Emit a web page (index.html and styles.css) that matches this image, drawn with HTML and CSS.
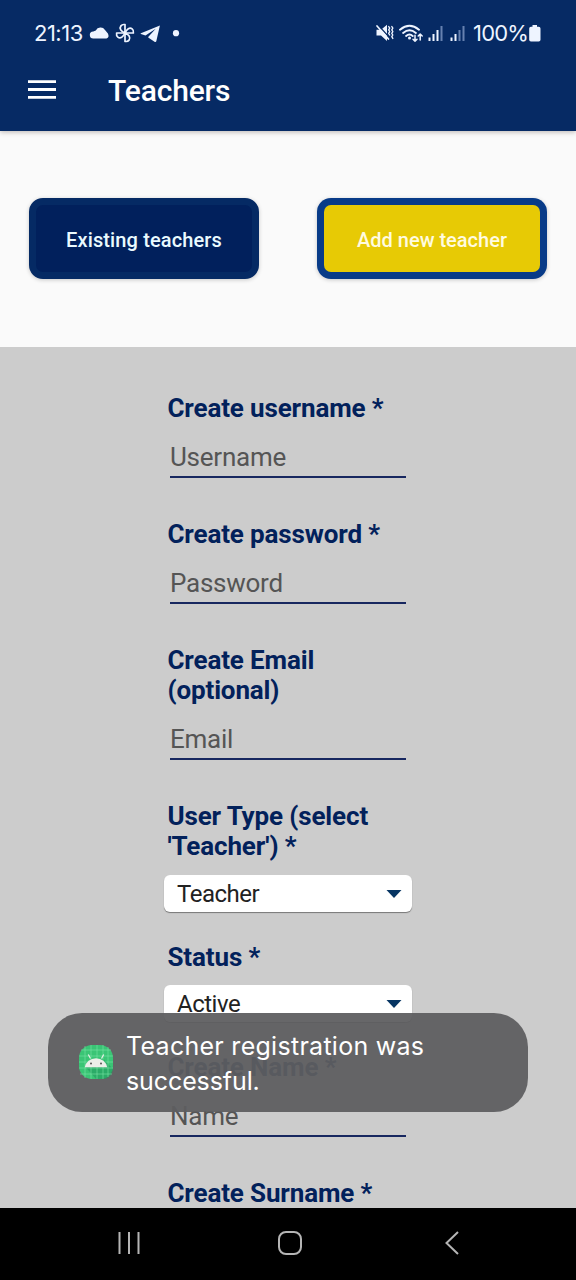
FILE: index.html
```html
<!DOCTYPE html>
<html lang="en">
<head>
<meta charset="utf-8">
<title>Teachers</title>
<link rel="stylesheet" href="styles.css">
</head>
<body>
<div class="screen">
  <header class="header">
    <div class="status">
      <span class="clock">21:13</span>
      <svg class="status-left" width="96" height="24" viewBox="0 0 96 24">
        <path fill="#eef4ff" d="M4.500 17.600a3.600 3.600 0 0 1-.2-7.200L6.800 9.600A5.300 5.300 0 0 1 16 9L18.900 12.400q1.800 3.800-1.400 5.200z"/>
        <g fill="none" stroke="#eef4ff" stroke-width="1.700" stroke-linejoin="round">
          <path d="M36 12V3.600C32.300 2.900 30.300 6 31.700 8.700Q33 10.700 36 12"/>
          <path d="M36 12V3.600C32.300 2.900 30.300 6 31.700 8.700Q33 10.700 36 12" transform="rotate(90 36 12)"/>
          <path d="M36 12V3.600C32.300 2.900 30.300 6 31.700 8.700Q33 10.700 36 12" transform="rotate(180 36 12)"/>
          <path d="M36 12V3.600C32.300 2.900 30.300 6 31.700 8.700Q33 10.700 36 12" transform="rotate(270 36 12)"/>
        </g>
        <path fill="#eef4ff" d="M70.900 4.600L51.900 12.200q-.8.500 0 .9l4.600 1.400l10.200-6.800l-7.300 8l-.2.900l6.700 4.300q1 .5 1.400-.6z"/>
        <circle cx="87" cy="12.200" r="3.100" fill="#eef4ff"/>
      </svg>
      <svg class="status-right" width="94" height="24" viewBox="0 0 94 24">
        <g fill="#eef4ff">
          <path d="M2.500 8.700h4.500l6-5V20l-6-5.500H2.500z"/>
          <circle cx="35.500" cy="17" r="1.500"/>
          <rect x="54.500" y="16.500" width="2" height="3.500"/>
          <rect x="58.500" y="13" width="2" height="7"/>
          <rect x="62.500" y="9" width="2" height="11"/>
          <rect x="76.500" y="16.500" width="2" height="3.500"/>
          <rect x="80.500" y="13" width="2" height="7"/>
        </g>
        <g fill="#6681b0">
          <rect x="66.500" y="5" width="2" height="15"/>
          <rect x="84.500" y="9" width="2" height="11"/>
          <rect x="88.500" y="5" width="2" height="15"/>
        </g>
        <path d="M4.500 4.500L15 16" stroke="#062a64" stroke-width="1.200"/>
        <g fill="none" stroke="#eef4ff" stroke-width="1.700" stroke-linecap="round" stroke-linejoin="round">
          <path d="M3 5L14.500 18"/>
          <path d="M14.700 5.500l1 1.700l-1 1.700l1 1.700l-1 1.700l1 1.700M17.800 5.500l1 1.700l-1 1.700l1 1.700l-1 1.700l1 1.700l-1 1.700l1 1.700" stroke-width="1.400"/>
          <path d="M26 8.700Q35.500 1 45 8.700M29.100 12Q35.500 6.700 41.900 12M32.100 15Q35.500 12.200 38.700 15" stroke-width="1.900"/>
          <path d="M41 14.200v6m-2-2l2 2l2-2M46.200 19v-6m-2 2l2-2l2 2" stroke-width="1.500"/>
        </g>
      </svg>
      <span class="battery-text">100%</span>
      <svg class="battery" width="12" height="17" viewBox="0 0 12 17"><path fill="#eef4ff" d="M3.500 0h4.500v1.700h1.700q1.800 0 1.800 1.800v11.200q0 1.800-1.800 1.800h-7.700q-1.800 0-1.800-1.800v-11.200q0-1.800 1.800-1.800h1.500z"/></svg>
    </div>
    <div class="title-row">
      <svg class="menu" width="28" height="20" viewBox="0 0 28 20"><path fill="#fff" d="M0 .3h28v2.800H0zM0 8.100h28v2.800H0zM0 15.900h28v2.800H0z"/></svg>
      <h1 class="title">Teachers</h1>
    </div>
  </header>
  <nav class="tabs">
    <button class="tab existing">Existing teachers</button>
    <button class="tab add">Add new teacher</button>
  </nav>
  <main class="form">
    <div class="field"><div class="label">Create username *</div><div class="input">Username</div></div>
    <div class="field"><div class="label">Create password *</div><div class="input">Password</div></div>
    <div class="field"><div class="label">Create Email<br>(optional)</div><div class="input">Email</div></div>
    <div class="field choice"><div class="label">User Type (select<br>'Teacher') *</div><div class="select">Teacher<svg width="16" height="8" viewBox="0 0 16 8"><path fill="#073563" d="M.5 0h15L8 8z"/></svg></div></div>
    <div class="field choice"><div class="label">Status *</div><div class="select">Active<svg width="16" height="8" viewBox="0 0 16 8"><path fill="#073563" d="M.5 0h15L8 8z"/></svg></div></div>
    <div class="field"><div class="label">Create Name *</div><div class="input">Name</div></div>
    <div class="field"><div class="label">Create Surname *</div></div>
  </main>
  <footer class="navbar">
    <svg width="24" height="26" viewBox="0 0 24 26"><path d="M2.500 2v22M12 2v22M21.500 2v22" stroke="#b5b5b5" stroke-width="2"/></svg>
    <svg class="home" width="26" height="26" viewBox="0 0 26 26"><rect x="2" y="2" width="22" height="22" rx="7" fill="none" stroke="#b5b5b5" stroke-width="2"/></svg>
    <svg width="18" height="26" viewBox="0 0 18 26"><path d="M15 2L3.500 13L15 24" fill="none" stroke="#b5b5b5" stroke-width="2"/></svg>
  </footer>
  <div class="toast">
    <svg class="app-icon" width="34" height="34" viewBox="0 0 34 34">
      <rect width="34" height="34" rx="13" fill="#3ac575"/>
      <path d="M6.500 22L17 34h9q7-2 8-10L24.500 14z" fill="#239c60" opacity=".65"/>
      <path d="M6 1v32M12 0v34M18 0v34M24 0v34M29 2v30M2 5h30M0 11h34M0 17h34M0 23h34M1 29h32" stroke="#7be3a5" stroke-width=".6"/>
      <path d="M5.800 22.300a11.300 10.500 0 0 1 22.400 0z" fill="#eceee9"/>
      <path d="M11.500 13.500L9.300 9.500M22.500 13.500l2.200-4" stroke="#eceee9" stroke-width="1.200"/>
      <circle cx="12" cy="18.500" r="1" fill="#555"/><circle cx="22" cy="18.500" r="1" fill="#555"/>
    </svg>
    <div class="toast-text"><span class="toast-first">Teacher registration was</span><br><span class="toast-second">successful.</span></div>
  </div>
</div>
</body>
</html>
```
FILE: styles.css
```css
* { box-sizing: border-box; }
body { margin: 0; font-family: Roboto, "Liberation Sans", sans-serif; }
svg { display: block; flex: none; }
.screen { position: relative; width: 576px; height: 1280px; display: flex; flex-direction: column; overflow: hidden; background: #fafafa; }
.header { height: 131px; flex: none; background: #062a64; box-shadow: 0 1px 5px rgba(40, 20, 10, .3); z-index: 1; }
.status { height: 65px; padding: 1px 33px 0 34px; display: flex; align-items: center; color: #eef4ff; }
.clock { font: 22px/26px Inter, sans-serif; letter-spacing: -.5px; width: 55px; flex: none; }
.status-right { margin-left: 189px; }
.battery-text { font: 22px/26px Inter, sans-serif; letter-spacing: -.8px; width: 57px; margin-left: 5px; flex: none; }
.battery { margin-left: -1px; }
.title-row { padding: 8px 28px 0; display: flex; align-items: center; }
.menu { margin-bottom: 2px; }
.title { margin: 0 0 0 52px; font-size: 30px; line-height: 35px; font-weight: 500; letter-spacing: -.15px; color: #fff; }
.tabs { height: 216px; flex: none; padding: 67px 29px 0; display: flex; justify-content: space-between; }
.tab { width: 230px; height: 81px; padding: 2px 0 0; border-radius: 14px; font: 500 20px/24px Roboto, sans-serif; box-shadow: 0 1px 4px rgba(0, 0, 0, .2); }
.existing { background: #01205c; border: 7px solid #052a64; color: #eafaff; letter-spacing: .12px; }
.add { background: linear-gradient(#e7ca05, #e7ca05) padding-box, #083b88 border-box; border: 7px solid transparent; color: #fffbe0; }
.form { flex: 1; min-height: 0; overflow: hidden; background: #ccc; padding: 46px 164px 0; }
.field { padding-bottom: 41px; }
.label { padding-left: 3.500px; font-size: 26px; line-height: 30.200px; font-weight: 700; letter-spacing: -.14px; color: #02215b; white-space: nowrap; }
.input { margin: 0 6px; height: 54.800px; padding-top: 19px; border-bottom: 2px solid #17275f; font-size: 26px; line-height: 31px; letter-spacing: -.25px; color: #555; }
.choice { padding-bottom: 30px; }
.select { margin-top: 13px; height: 37px; padding: 2px 10px 0 13px; display: flex; justify-content: space-between; align-items: center; border-radius: 6px; background: #fff; box-shadow: 0 1px 1px #777; font-size: 24px; line-height: 30px; letter-spacing: -.5px; color: #222; }
.navbar { height: 72px; flex: none; background: #000; padding: 0 115px 2px 117px; display: flex; align-items: center; justify-content: space-between; }
.home { margin-right: 4px; }
.toast { position: absolute; left: 48px; top: 1013px; width: 480px; height: 99px; border-radius: 34px; background: rgba(93, 93, 96, .94); display: flex; align-items: center; padding-left: 31px; }
.app-icon { margin-bottom: 2px; }
.toast-text { margin-left: 13px; padding-top: 2px; font: 25px/35px Inter, sans-serif; color: #fff; white-space: nowrap; }
.toast-first { letter-spacing: .28px; }
.toast-second { letter-spacing: -.1px; }
```
